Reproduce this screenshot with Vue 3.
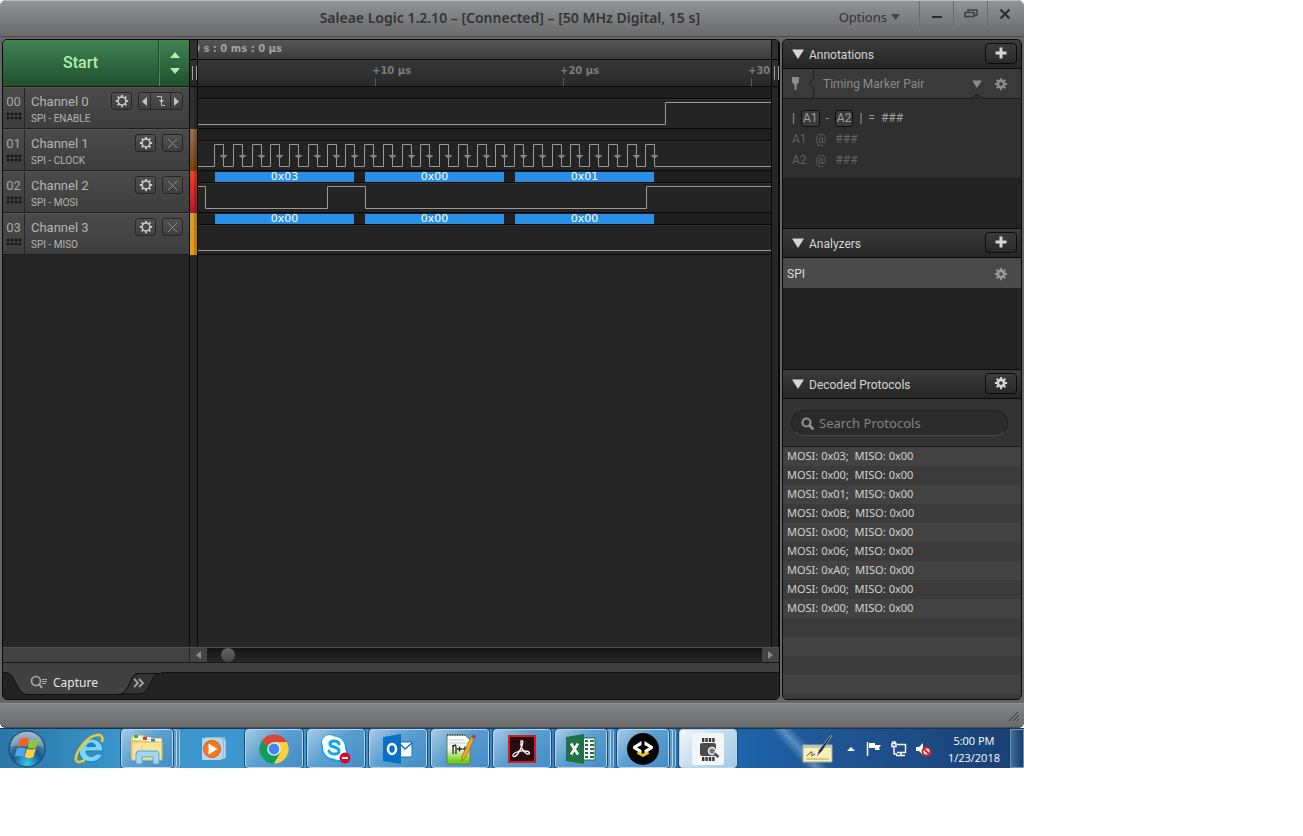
<template>
  <div class="desktop">
    <svg class="symbols" aria-hidden="true">
      <symbol id="gear" viewBox="0 0 16 16">
        <circle cx="8" cy="8" r="4.500" fill="none" stroke="currentColor" stroke-width="1.800" />
        <path
          d="M8 1v3M8 12v3M1 8h3M12 8h3M3 3l2 2M11 11l2 2M3 13l2-2M11 5l2-2"
          stroke="currentColor"
          stroke-width="2.200"
        />
      </symbol>
      <symbol id="cog" viewBox="0 0 16 16">
        <circle cx="8" cy="8" r="3.600" fill="none" stroke="currentColor" stroke-width="3" />
        <path
          d="M8 1v3M8 12v3M1 8h3M12 8h3M3 3l2.500 2.500M10.500 10.500l2.500 2.500M3 13l2.500-2.500M10.500 5.500l2.500-2.500"
          stroke="currentColor"
          stroke-width="2.200"
        />
      </symbol>
      <symbol id="plus" viewBox="0 0 12 12">
        <path d="M6 0.500v11M0.500 6h11" stroke="currentColor" stroke-width="3" />
      </symbol>
      <symbol id="down" viewBox="0 0 12 10">
        <path d="M0 0.500h12L6 10z" fill="currentColor" />
      </symbol>
    </svg>

    <main class="window">
      <header class="titlebar">
        <h1>Saleae Logic 1.2.10 – [Connected] – [50 MHz Digital, 15 s]</h1>
        <button class="options" type="button">
          Options
          <svg width="9" height="6" viewBox="0 0 9 6"><path d="M0 0h9L4.500 6z" fill="#444" /></svg>
        </button>
        <button class="win-btn" type="button" aria-label="Minimize">
          <svg width="12" height="12"><path d="M1 9h10" stroke="#2b2b2b" stroke-width="2" /></svg>
        </button>
        <button class="win-btn" type="button" aria-label="Restore">
          <svg width="14" height="12" fill="none" stroke="#3c3c3c" stroke-width="1.500">
            <path d="M4 4V2h9v5h-3" />
            <rect x="1" y="4.500" width="9" height="4" />
          </svg>
        </button>
        <button class="win-btn" type="button" aria-label="Close">
          <svg width="12" height="12"><path d="M1.500 1.500l9 9M10.500 1.500l-9 9" stroke="#2b2b2b" stroke-width="2" /></svg>
        </button>
      </header>

      <div class="workspace">
        <section class="capture">
          <div class="scope">
            <div class="channel-col">
              <div class="start-row">
                <button class="start" type="button">Start</button>
                <button class="start-opts" type="button" aria-label="Capture settings">
                  <svg width="10" height="22" fill="#b4eeb0">
                    <path d="M0 6L5 0l5 6zM0 16h10l-5 6z" />
                  </svg>
                </button>
              </div>
              <div v-for="ch in channels" :key="ch.id" class="channel">
                <div class="num">
                  <span>{{ ch.id }}</span>
                  <i class="grip"></i>
                </div>
                <div class="ch-text">
                  <span class="ch-name">{{ ch.name }}</span>
                  <span class="ch-sub">{{ ch.sub }}</span>
                </div>
                <button class="ch-btn" type="button" :aria-label="ch.name + ' settings'">
                  <svg width="14" height="14"><use href="#gear" /></svg>
                </button>
                <div v-if="ch.trigger" class="trigger">
                  <button type="button" aria-label="Previous edge">
                    <svg width="5" height="9"><path d="M5 0v9L0 4.500z" fill="#c2c2c2" /></svg>
                  </button>
                  <button class="edge" type="button" aria-label="Trigger edge">
                    <svg width="10" height="12" fill="none" stroke="#c2c2c2">
                      <path d="M1 1.500h4.500v9H9" />
                      <path d="M3 5h5L5.500 8z" fill="#c2c2c2" stroke="none" />
                    </svg>
                  </button>
                  <button type="button" aria-label="Next edge">
                    <svg width="5" height="9"><path d="M0 0v9l5-4.500z" fill="#c2c2c2" /></svg>
                  </button>
                </div>
                <button v-else class="ch-btn" type="button" aria-label="Clear trigger">
                  <svg width="11" height="11"><path d="M1 1l9 9M10 1l-9 9" stroke="#8d8d8d" /></svg>
                </button>
              </div>
            </div>

            <div class="gutter left">
              <div class="handle"></div>
              <div v-for="ch in channels" :key="ch.id" class="swatch" :class="ch.color"></div>
            </div>

            <div class="plot">
              <div class="origin"><span>0 s : 0 ms : 0 µs</span></div>
              <div class="ruler">
                <span v-for="t in ticks" :key="t">{{ t }}</span>
              </div>
              <div v-for="ch in channels" :key="ch.id" class="lane">
                <div class="bytes">
                  <span v-for="(b, i) in ch.bytes" :key="i">{{ b }}</span>
                </div>
                <svg class="wave">
                  <path :d="ch.wave" />
                  <path v-for="x in ch.marks" :key="x" class="mark" :d="`M${x - 4} 13h8l-4 4z`" />
                </svg>
              </div>
            </div>

            <div class="gutter">
              <div class="handle"></div>
            </div>
          </div>

          <div class="scroll-row">
            <div class="scroll-pad"></div>
            <button type="button" aria-label="Scroll left">
              <svg width="5" height="8"><path d="M5 0v8L0 4z" fill="#8b8b8b" /></svg>
            </button>
            <div class="track"><i class="thumb"></i></div>
            <button type="button" aria-label="Scroll right">
              <svg width="5" height="8"><path d="M0 0v8l5-4z" fill="#8b8b8b" /></svg>
            </button>
          </div>

          <nav class="tabs">
            <svg class="tab-shape" width="160" height="37">
              <path d="M115 31c6 0 8-4 11-10s4-11 10-11h19c-5 3-6 8-9 13s-4 8-9 8z" fill="#333" stroke="#0e0e0e" />
              <path d="M0 9c10 0 10 6 13 11s5 11 11 11h91c6 0 8-4 11-10s4-11 10-11h22V0H0z" fill="#414141" />
              <path d="M0 9.500c10 0 10 6 13 11s5 11 11 11h91c6 0 8-4 11-10s4-11 10-11h22" fill="none" stroke="#111" />
            </svg>
            <button class="tab" type="button">
              <svg width="17" height="15" fill="none" stroke="#aaa">
                <circle cx="6" cy="6" r="4.500" stroke-width="1.600" />
                <path d="M9 9l3 4" stroke-width="2" />
                <path d="M12 4.500h5M12 6.500h5M12 8.500h4" />
              </svg>
              Capture
            </button>
            <button class="more" type="button" aria-label="More tabs">
              <svg width="12" height="10" fill="none" stroke="#a5a5a5" stroke-width="1.800">
                <path d="M1 1l4 4-4 4M6 1l4 4-4 4" />
              </svg>
            </button>
          </nav>
        </section>

        <aside class="side">
          <section class="annotations">
            <div class="side-head">
              <svg width="12" height="10"><use href="#down" /></svg>
              <h2>Annotations</h2>
              <button type="button" aria-label="Add annotation"><svg width="12" height="12"><use href="#plus" /></svg></button>
            </div>
            <div class="marker-row">
              <svg width="9" height="13"><path d="M1 0h7v5L5.500 8v5h-2V8L1 5z" fill="#8c8c8c" /></svg>
              <svg class="notch" width="6" height="29"><path d="M5.500 0v9l-4 5.500 4 5.500v9" fill="none" stroke="#1f1f1f" /></svg>
              <span>Timing Marker Pair</span>
              <svg class="arrow" width="10" height="8" viewBox="0 0 12 10"><use href="#down" /></svg>
              <button type="button" aria-label="Marker settings"><svg width="14" height="14"><use href="#cog" /></svg></button>
              <svg class="bump" width="16" height="5"><path d="M0 4.500c5 0 5-4 8-4s3 4 8 4" fill="#2e2e2e" stroke="#1d1d1d" /></svg>
            </div>
            <div class="markers">
              <p class="diff">
                <span>|</span><kbd>A1</kbd><span>-</span><kbd>A2</kbd><span>|</span><span>=</span><span>###</span>
              </p>
              <p><span>A1</span><span>@</span><span>###</span></p>
              <p><span>A2</span><span>@</span><span>###</span></p>
            </div>
          </section>

          <section class="analyzers">
            <div class="side-head">
              <svg width="12" height="10"><use href="#down" /></svg>
              <h2>Analyzers</h2>
              <button type="button" aria-label="Add analyzer"><svg width="12" height="12"><use href="#plus" /></svg></button>
            </div>
            <div class="analyzer">
              <span>SPI</span>
              <button type="button" aria-label="SPI settings"><svg width="14" height="14"><use href="#cog" /></svg></button>
            </div>
          </section>

          <section class="decoded">
            <div class="side-head">
              <svg width="12" height="10"><use href="#down" /></svg>
              <h2>Decoded Protocols</h2>
              <button type="button" aria-label="Protocol settings"><svg width="14" height="14"><use href="#cog" /></svg></button>
            </div>
            <div class="search">
              <label>
                <svg width="13" height="13" fill="none" stroke="#929292">
                  <circle cx="5.500" cy="5.500" r="4" stroke-width="2.200" />
                  <path d="M8.500 8.500l4 4" stroke-width="2.600" />
                </svg>
                <input type="text" placeholder="Search Protocols" aria-label="Search Protocols" />
              </label>
            </div>
            <ul>
              <li v-for="(row, i) in decoded" :key="i">MOSI: {{ row[0] }};&nbsp; MISO: {{ row[1] }}</li>
            </ul>
          </section>
        </aside>
      </div>

      <footer class="statusbar">
        <svg width="12" height="11" stroke="#333"><path d="M1 10L10 1M5 10l6-6M9 10l2-2" /></svg>
      </footer>
    </main>

    <div class="taskbar">
      <button class="orb" type="button" aria-label="Start menu">
        <svg width="38" height="38" viewBox="0 0 38 38">
          <defs>
            <radialGradient id="orbFill" cx="0.500" cy="0.900" r="0.900">
              <stop offset="0" stop-color="#3fc4ee" />
              <stop offset="0.450" stop-color="#17588c" />
              <stop offset="1" stop-color="#8fabc2" />
            </radialGradient>
          </defs>
          <circle cx="19" cy="19" r="18" fill="url(#orbFill)" stroke="#173f63" />
          <path d="M3 17a16 15 0 0 1 32 0c-10-3-22-3-32 0z" fill="#fff" opacity="0.250" />
          <path d="M12 9c3-2 6-2 9-0.500L18.500 17c-3-1.500-6-1.500-9 0z" fill="#f0632a" />
          <path d="M22 9c3 1.500 6 1.500 9-1l-2.500 9c-3 2-6 2-9 0.500z" fill="#8fc83f" />
          <path d="M9 18.500c3-1.500 6-1.500 9 0l-2.500 8.500c-3-1.500-6-1.500-9 0z" fill="#4fa9e8" />
          <path d="M19 18.500c3 1.500 6 1.500 9-0.500l-2.500 9c-3 1.500-6 1.500-9 0z" fill="#fbd03b" />
        </svg>
      </button>

      <button class="task plain" type="button" aria-label="Internet Explorer">
        <svg width="34" height="34" viewBox="0 0 34 34" fill="none">
          <path d="M30 19H13c0 6 7 7 10 3h6.500C25 34 6 32 6 18 7 3 30 3 30 19z" fill="#79d6fb" stroke="#1a78bd" />
          <path d="M13 15h10c0-6-9.500-6-10 0z" fill="#2681bd" />
          <path d="M29 10c3-11-10-8-18 1S0 30 6 30c2 0 4-1 6-2" stroke="#f0c928" stroke-width="2.600" />
        </svg>
      </button>

      <button class="task stacked" type="button" aria-label="Windows Explorer">
        <svg width="34" height="32" viewBox="0 0 34 32">
          <path d="M1 5l2-3h10l2 3h17v21H1z" fill="#e9cd72" />
          <path d="M3 3h9v4H3z" fill="#fff6cf" />
          <path d="M4 2h4v3H4z" fill="#2dae3e" />
          <path d="M11 4h10v4H11z" fill="#fff6cf" />
          <path d="M13 4h4v3h-4z" fill="#d43d25" />
          <path d="M19 6h12v4H19z" fill="#fff6cf" />
          <path d="M21 6h4v3h-4z" fill="#2b8ad8" />
          <path d="M2 9h30v18H2z" fill="#f6e49b" stroke="#d8bd62" />
          <path d="M6 31V21q0-3 3-3h17q3 0 3 3v10h-6v-7H12v7z" fill="#9fd6f0" stroke="#5aa4cc" />
        </svg>
      </button>

      <button class="task plain" type="button" aria-label="Media Player">
        <svg width="26" height="26" viewBox="0 0 26 26">
          <path d="M4 1h20v22H4z" fill="#8dbbdc" />
          <path d="M21 3v20M24 4v18" stroke="#e2f1fb" />
          <path d="M1 2h19v22H1z" fill="#b8d4e8" />
          <circle cx="11" cy="13" r="8.500" fill="#f07a1d" stroke="#d35c10" />
          <path d="M7.500 7.500l9 5.500-9 5.500z" fill="#fff" />
        </svg>
      </button>

      <button class="task" type="button" aria-label="Chrome">
        <svg width="30" height="30" viewBox="0 0 30 30">
          <path d="M15 15L2.400 7.700A14.500 14.500 0 0 1 27.600 7.700z" fill="#db4437" />
          <path d="M2.400 7.700A14.500 14.500 0 0 0 15 29.500L21 18.500 15 15z" fill="#109d58" />
          <path d="M27.600 7.700A14.500 14.500 0 0 1 15 29.500l6.500-11L15 8h12.700z" fill="#ffcd40" />
          <circle cx="15" cy="15" r="6.800" fill="#f3f3f3" />
          <circle cx="15" cy="15" r="5.400" fill="#4285f4" />
        </svg>
      </button>

      <button class="task" type="button" aria-label="Skype">
        <svg width="32" height="32" viewBox="0 0 32 32">
          <circle cx="10" cy="10" r="9" fill="#12a5e8" />
          <circle cx="19" cy="20" r="9" fill="#12a5e8" />
          <circle cx="14" cy="15" r="12.500" fill="#12a5e8" />
          <circle cx="9.500" cy="9.500" r="7.500" fill="#fff" />
          <circle cx="18.500" cy="19.500" r="7.500" fill="#fff" />
          <circle cx="14" cy="14.500" r="11" fill="#fff" />
          <path d="M19 11c-1-4-9-4-9 0 0 4 9 2 9 7 0 4-9 4-10 0" fill="none" stroke="#12a5e8" stroke-width="3" stroke-linecap="round" />
          <circle cx="25" cy="25" r="5.500" fill="#d60b2a" />
          <path d="M22 25h6" stroke="#fff" stroke-width="2" />
        </svg>
      </button>

      <button class="task" type="button" aria-label="Outlook">
        <svg width="30" height="32" viewBox="0 0 30 32">
          <path d="M16 9h13v15H16z" fill="#fff" stroke="#0e72c5" />
          <path d="M16 10l6 6 7-6" fill="none" stroke="#0e72c5" stroke-width="1.600" />
          <path d="M0 4l18-3v30L0 28z" fill="#0a70c4" />
          <ellipse cx="9" cy="16" rx="4" ry="5" fill="none" stroke="#fff" stroke-width="2.600" />
        </svg>
      </button>

      <button class="task" type="button" aria-label="Notepad++">
        <svg width="32" height="34" viewBox="0 0 32 34">
          <defs>
            <linearGradient id="nppFill" x1="0" y1="0" x2="0" y2="1">
              <stop offset="0.450" stop-color="#fdfdf2" />
              <stop offset="0.900" stop-color="#6fd010" />
            </linearGradient>
          </defs>
          <path d="M3 3h18l5 5v24H3z" fill="url(#nppFill)" stroke="#6b7757" />
          <path d="M3 3h18" stroke="#555" stroke-width="2" stroke-dasharray="1 1.500" />
          <path d="M5 8h15M5 11h19" stroke="#c4ccd0" />
          <path d="M9 22v-9M9 15q3-4 3 0v7M13 17h5M15.500 14.500v5M18.500 17h5M21 14.500v5" fill="none" stroke="#222" stroke-width="1.300" />
          <path d="M27 5l3 2-8 18-4 4v-5z" fill="#efaa2b" stroke="#9a651a" stroke-width="0.700" />
          <path d="M28 5l1-3 3 2-1 3z" fill="#a3415d" />
        </svg>
      </button>

      <button class="task" type="button" aria-label="Acrobat Reader">
        <svg width="30" height="30" viewBox="0 0 30 30">
          <path d="M2 2h26v26H2z" fill="#270c10" stroke="#d31f1c" stroke-width="2" />
          <path
            d="M14 7c3-2 2 4-1 9-2 5-6 8-7 6-1-3 8-6 12-5 5 0 6 4 2 3-4-2-7-8-6-13z"
            fill="none"
            stroke="#fff"
            stroke-width="1.300"
          />
        </svg>
      </button>

      <button class="task stacked" type="button" aria-label="Excel">
        <svg width="30" height="32" viewBox="0 0 30 32">
          <path d="M15 5h14v22H15z" fill="#fff" stroke="#1f7244" />
          <path d="M19 8h3M24 8h4M19 12h3M24 12h4M19 16h3M24 16h4M19 20h3M24 20h4M19 24h3M24 24h4" stroke="#1f7244" stroke-width="2" />
          <path d="M0 4l18-3v30L0 28z" fill="#1f7244" />
          <path d="M5 10.500l7 11M12 10.500l-7 11" stroke="#fff" stroke-width="2.600" />
        </svg>
      </button>

      <button class="task stacked" type="button" aria-label="Code tool">
        <svg width="32" height="32" viewBox="0 0 32 32">
          <circle cx="16" cy="16" r="16" fill="#050505" />
          <path d="M14.500 8v4l-4.500 2.500 4.500 2.500v4L6 15.500v-2zM17.500 8v4l4.500 2.500-4.500 2.500v4L26 15.500v-2z" fill="#fff" />
          <path d="M10.500 19.500l5.500 3 5.500-3" fill="none" stroke="#f2c51c" stroke-width="2.600" />
        </svg>
      </button>

      <button class="task active" type="button" aria-label="Logic">
        <svg width="32" height="32" viewBox="0 0 32 32">
          <rect width="32" height="32" rx="2" fill="#f3f5f6" />
          <path d="M10 7h13M10 26h13" stroke="#353535" stroke-width="4" stroke-dasharray="2.400 1" />
          <rect x="8" y="10" width="16" height="13" rx="2" fill="#4a4a4a" />
          <circle cx="20" cy="18" r="3.500" fill="#777" stroke="#f3f5f6" stroke-width="1.500" />
          <path d="M22.500 20.500l4 3.500" stroke="#4a4a4a" stroke-width="2.600" />
        </svg>
      </button>

      <div class="tray">
        <svg width="32" height="30" viewBox="0 0 32 30">
          <path d="M1 11h29v17H1z" fill="#f6f0b8" stroke="#b1a982" />
          <path d="M1 11h29v3H1z" fill="#c2c4bf" />
          <path d="M4 25h23" stroke="#b5a257" />
          <path d="M5 22c3-3 5-6 5-3s-2 4 3 1" fill="none" stroke="#444" />
          <path d="M30 2L20 17l-5 5 2-6L28 2z" fill="#222e38" stroke="#a7bdc8" stroke-width="0.700" />
        </svg>
        <svg width="8" height="4"><path d="M0 4l4-4 4 4z" fill="#fff" /></svg>
        <svg width="16" height="16">
          <path d="M1.500 1v14" stroke="#fff" stroke-width="1.500" />
          <path d="M3 2h6v2h6l-2 3 1 2H9V7H3z" fill="#fff" />
        </svg>
        <svg width="16" height="16" fill="none" stroke="#fff" stroke-width="1.400">
          <path d="M6 3.500h8.500v8H6M5 14.500h9M10 12v2" />
          <path d="M1 2.500h4v3H1zM2 0v2M4 0v2M3 6v7h3" />
        </svg>
        <svg width="16" height="16">
          <path d="M0 6h3l4-4v12l-4-4H0z" fill="#fff" />
          <circle cx="10.500" cy="10.500" r="4" fill="#fff" stroke="#d8202a" stroke-width="2" />
          <path d="M7.500 7.500l6 6" stroke="#d8202a" stroke-width="2" />
        </svg>
        <time>5:00 PM<br />1/23/2018</time>
        <button class="show-desktop" type="button" aria-label="Show desktop"></button>
      </div>
    </div>
  </div>
</template>

<script setup>
const ticks = ['+10 µs', '+20 µs', '+30']

// 24 clock pulses, three bytes of eight
const pulses = Array.from({ length: 24 }, (_, i) => Math.floor(16.5 + i * 18.75) + 0.5)
const clock = 'M0 24.5' + pulses.map((x) => `H${x}V2.5H${x + 9}V24.5`).join('') + 'H3000'

const channels = [
  { id: '00', name: 'Channel 0', sub: 'SPI - ENABLE', color: 'black', trigger: true, bytes: [], wave: 'M0 24.5H467.5V2.5H3000' },
  {
    id: '01',
    name: 'Channel 1',
    sub: 'SPI - CLOCK',
    color: 'brown',
    bytes: [],
    wave: clock,
    marks: pulses.map((x) => x + 9),
  },
  {
    id: '02',
    name: 'Channel 2',
    sub: 'SPI - MOSI',
    color: 'red',
    bytes: ['0x03', '0x00', '0x01'],
    wave: 'M0 2.5H7.5V24.5H129.5V2.5H167.5V24.5H448.5V2.5H3000',
  },
  {
    id: '03',
    name: 'Channel 3',
    sub: 'SPI - MISO',
    color: 'orange',
    bytes: ['0x00', '0x00', '0x00'],
    wave: 'M0 24.5H3000',
  },
]

const decoded = [
  ['0x03', '0x00'],
  ['0x00', '0x00'],
  ['0x01', '0x00'],
  ['0x0B', '0x00'],
  ['0x00', '0x00'],
  ['0x06', '0x00'],
  ['0xA0', '0x00'],
  ['0x00', '0x00'],
  ['0x00', '0x00'],
]
</script>

<style>
body {
  background: #fff;
}
</style>

<style scoped>
* {
  box-sizing: border-box;
}

button {
  display: flex;
  align-items: center;
  justify-content: center;
  padding: 0;
  border: 0;
  background: none;
  color: inherit;
  font: inherit;
}

h1,
h2,
p,
ul {
  margin: 0;
  padding: 0;
  list-style: none;
}

svg {
  display: block;
  flex: none;
}

.symbols {
  position: absolute;
  width: 0;
  height: 0;
}

.desktop {
  display: flex;
  flex-direction: column;
  max-width: 1024px;
  min-height: 768px;
  font-family: Roboto, sans-serif;
  font-size: 12px;
  color: #b5b5b5;
}

.window {
  flex: 1;
  display: flex;
  flex-direction: column;
  background: #666;
  border-radius: 6px;
}

/* title bar */
.titlebar {
  display: flex;
  align-items: flex-start;
  height: 37px;
  margin-bottom: 2px;
  padding-right: 3px;
  background: linear-gradient(#929395, #7d7e80 50%, #6b6b6b);
  border-top: 1px solid #b9c2be;
  border-bottom: 1px solid #4b4b4b;
  border-radius: 6px 6px 0 0;
  color: #333;
  font-family: "Noto Sans", sans-serif;
}

.titlebar h1 {
  flex: 1;
  padding-left: 181px;
  text-align: center;
  font-size: 14px;
  font-weight: 600;
  line-height: 34px;
  white-space: nowrap;
}

.options {
  gap: 4px;
  height: 31px;
  margin-right: 19px;
  font-size: 13px;
}

.win-btn {
  width: 34px;
  height: 25px;
  border-left: 1px solid #696a6b;
}

/* workspace */
.workspace {
  flex: 1;
  display: flex;
  gap: 2px;
  padding: 0 2px;
}

.capture {
  flex: 1;
  min-width: 0;
  display: flex;
  flex-direction: column;
  background: #262626;
  border: 1px solid #0a0a0a;
  border-radius: 5px;
  overflow: hidden;
}

.scope {
  flex: 1;
  display: flex;
}

.channel-col {
  width: 186px;
}

.start-row {
  display: flex;
  height: 47px;
  border-bottom: 1px solid #101a13;
  background: linear-gradient(#3f8252, #2f6a40 50%, #214f2f);
  color: #b4eeb0;
}

.start {
  flex: 1;
  padding-bottom: 2px;
  font-size: 16px;
  font-weight: 500;
  border-right: 1px solid #1e452a;
}

.start-opts {
  width: 30px;
  border-left: 1px solid #4a8b5c;
}

.channel {
  display: flex;
  align-items: flex-start;
  height: 42px;
  padding-right: 6px;
  border-top: 1px solid #565656;
  border-bottom: 1px solid #1c1c1c;
  background: linear-gradient(#4a4a4a, #3e3e3e);
}

.num {
  align-self: stretch;
  width: 22px;
  padding-top: 6px;
  border-right: 1px solid #262626;
  text-align: center;
  font-size: 13px;
  line-height: 16px;
  color: #a8a8a8;
}

.grip {
  display: block;
  width: 16px;
  height: 8px;
  margin: 2px 0 0 3px;
  background: radial-gradient(circle, #191919 1px, transparent 2px) 0 0 / 4px 4px;
}

.ch-text {
  flex: 1;
  display: flex;
  flex-direction: column;
  padding: 6px 0 0 6px;
  white-space: nowrap;
}

.ch-name {
  font-size: 13px;
  line-height: 16px;
}

.ch-sub {
  font-size: 10px;
  line-height: 18px;
}

.ch-btn,
.trigger {
  height: 18px;
  margin: 4px 0 0 6px;
  border: 1px solid #252525;
  border-radius: 3px;
  background: linear-gradient(#505050, #3f3f3f);
  color: #c8c8c8;
}

.ch-btn {
  width: 21px;
}

.trigger {
  display: flex;
  width: 45px;
}

.trigger button {
  width: 11px;
}

.trigger .edge {
  flex: 1;
  border: solid #282828;
  border-width: 0 1px;
}

.gutter {
  width: 8px;
  border: solid #080808;
  border-width: 0 1px;
  background: #262626;
}

.gutter.left {
  width: 9px;
}

.handle {
  height: 47px;
  padding: 26px 2px 6px;
  border-bottom: 1px solid #080808;
  background: linear-gradient(#303030 19px, #000 19px, #000 20px, #303030 20px, #252525);
}

.handle::before {
  content: "";
  display: block;
  width: 3px;
  height: 14px;
  border: solid #a0a0a0;
  border-width: 0 1px;
}

.swatch {
  height: 42px;
  border-right: 3px solid #00000030;
}

.black { background: #303030; }
.brown { background: linear-gradient(#96714f, #80420f); }
.red { background: linear-gradient(#f6421b, #b5143d); }
.orange { background: linear-gradient(#d1a02c, #ee9c0a); }

.plot {
  flex: 1;
  min-width: 0;
  font-family: "DejaVu Sans", sans-serif;
}

.origin {
  display: flex;
  height: 20px;
  overflow: hidden;
  border-bottom: 1px solid #0a0a0a;
  background: linear-gradient(#565656, #3c3c3c);
  color: #a3a3a3;
  font-size: 10px;
  font-weight: 700;
  line-height: 18px;
}

.origin span {
  margin-left: -5px;
  white-space: nowrap;
}

.ruler {
  display: flex;
  height: 27px;
  padding-left: 174px;
  overflow: hidden;
  border-bottom: 1px solid #080808;
  background: linear-gradient(#373737, #292929);
  color: #7c7c7c;
  font-size: 10px;
  font-weight: 700;
  line-height: 22px;
  white-space: nowrap;
}

.ruler span {
  flex: none;
  width: 188px;
}

.ruler span:last-child {
  width: 24px;
}

.ruler span::after {
  content: "";
  display: block;
  width: 1px;
  height: 8px;
  margin: -4px 0 0 3px;
  background: #5b5b5b;
}

.lane {
  height: 42px;
  border-bottom: 1px solid #080808;
  background: #242424;
}

.bytes {
  display: flex;
  gap: 11px;
  height: 12px;
  padding-left: 17px;
  border-bottom: 1px solid #080808;
  background: #1f1f1f;
}

.bytes span {
  width: 139px;
  margin-top: 1px;
  background: #2a8ee4;
  color: #fff;
  font-size: 11px;
  line-height: 10px;
  text-align: center;
}

.wave {
  width: 100%;
  height: 29px;
  border-top: 1px solid #303030;
  overflow: hidden;
  fill: none;
  stroke: #9a9a9a;
}

.mark {
  fill: #858585;
  stroke: none;
}

/* scrollbar */
.scroll-row {
  display: flex;
  height: 16px;
  border-top: 1px solid #505050;
  border-bottom: 1px solid #161616;
}

.scroll-pad {
  width: 187px;
  background: #424242;
  border-right: 1px solid #222;
}

.scroll-row button {
  width: 17px;
  background: #444;
}

.track {
  flex: 1;
  padding-left: 14px;
  background: linear-gradient(#141414, #282828);
}

.thumb {
  display: block;
  width: 14px;
  height: 14px;
  border-radius: 50%;
  background: linear-gradient(#666, #464646);
}

/* tabs */
.tabs {
  position: relative;
  display: flex;
  height: 36px;
  background: linear-gradient(#414141 9px, #111 9px, #111 10px, #232323 10px);
  font-family: "Noto Sans", sans-serif;
  font-size: 12px;
  color: #e8e8e8;
}

.tab-shape {
  position: absolute;
  inset: 0 auto auto 0;
}

.tab,
.more {
  z-index: 1;
  height: 38px;
}

.tab {
  gap: 6px;
  margin-left: 27px;
}

.more {
  margin-left: 35px;
  height: 40px;
}

/* right side panels */
.side {
  flex: none;
  width: 240px;
  display: flex;
  flex-direction: column;
  border: 1px solid #0a0a0a;
  border-radius: 5px;
  overflow: hidden;
  background: #232323;
}

.annotations {
  min-height: 188px;
}

.analyzers {
  min-height: 141px;
}

.decoded {
  flex: 1;
  display: flex;
  flex-direction: column;
}

.side-head {
  display: flex;
  align-items: center;
  gap: 5px;
  height: 30px;
  padding: 0 4px 0 9px;
  border: solid #080808;
  border-width: 1px 0;
  background: linear-gradient(#3b3b3b, #262626);
  color: #d6d6d6;
}

.annotations .side-head {
  height: 29px;
  border-top: 0;
}

.side-head h2 {
  flex: 1;
  padding-top: 2px;
  font-size: 12px;
  font-weight: 400;
}

.side-head button {
  width: 32px;
  height: 21px;
  margin-bottom: 2px;
  border: 1px solid #0c0c0c;
  border-radius: 4px;
  background: linear-gradient(#3c3c3c, #292929);
}

.marker-row {
  position: relative;
  display: flex;
  align-items: center;
  height: 30px;
  padding: 0 13px 0 8px;
  border-bottom: 1px solid #1d1d1d;
  background: #3a3a3a;
  color: #8c8c8c;
}

.notch {
  margin: 0 9px 0 8px;
}

.marker-row span {
  flex: 1;
}

.arrow {
  margin-right: 12px;
}

.bump {
  position: absolute;
  right: 36px;
  bottom: -1px;
}

.markers {
  padding: 9px 9px 7px;
  background: #2f2f2f;
  color: #626262;
  line-height: 21px;
}

.markers p {
  display: flex;
  align-items: center;
  gap: 9px;
}

.markers .diff {
  gap: 6px;
  color: #a0a0a0;
}

.markers kbd {
  padding: 0 1px;
  border: 1px solid #0d0d0d;
  border-radius: 3px;
  background: #3b3b3b;
  font: inherit;
  line-height: 15px;
}

.analyzer {
  display: flex;
  align-items: center;
  justify-content: space-between;
  height: 30px;
  padding: 1px 13px 0 4px;
  background: #4a4a4a;
  color: #dedede;
}

.analyzer button {
  color: #999;
}

.search {
  padding: 11px 13px 10px 8px;
  background: #333;
  border-bottom: 1px solid #191919;
}

.search label {
  display: flex;
  align-items: center;
  gap: 5px;
  height: 26px;
  padding: 0 9px;
  border: 1px solid #202020;
  border-bottom-color: #484848;
  border-radius: 13px;
  background: #2b2b2b;
}

.search input {
  flex: 1;
  min-width: 0;
  padding: 0;
  border: 0;
  outline: 0;
  background: none;
  color: #ccc;
  font: 13px "Noto Sans", sans-serif;
}

.search input::placeholder {
  color: #858585;
}

.decoded ul {
  flex: 1;
  background: repeating-linear-gradient(#424242 0, #424242 19px, #3b3b3b 19px, #3b3b3b 38px);
  color: #d2d2d2;
  font-family: "Noto Sans", sans-serif;
  font-size: 11px;
}

.decoded li {
  height: 19px;
  padding-left: 4px;
  line-height: 17px;
}

.statusbar {
  display: flex;
  align-items: flex-end;
  justify-content: flex-end;
  height: 25px;
  margin-top: 3px;
  padding: 0 4px 5px;
  border-top: 1px solid #8f8f8f;
  border-bottom: 1px solid #4a4a4a;
  border-radius: 0 0 6px 6px;
  background: linear-gradient(#828385, #6c6c6c);
}

/* Windows taskbar */
.taskbar {
  display: flex;
  align-items: stretch;
  gap: 4px;
  height: 40px;
  border-top: 1px solid #16354f;
  background:
    linear-gradient(48deg, transparent 42%, #a9cbe870 50%, transparent 58%) 745px 0 / 110px 40px no-repeat,
    linear-gradient(90deg, #2a76a8, #3a96cc 12%, #3f97cf 35%, #2f7dbf 60%, #1d62a8 74%, #1f5493 82%, #183f73);
}

.orb {
  width: 55px;
  padding-right: 1px;
}

.task {
  width: 58px;
  border: 1px solid #b5d6ec;
  border-radius: 3px;
  outline: 1px solid #1b4a73;
  background: linear-gradient(135deg, #a5cae4, #5a9fd0 45%, #458dc6);
}

.task.plain {
  padding-left: 4px;
  border-color: transparent;
  outline: 0;
  background: none;
}

.task.stacked {
  width: 52px;
  margin-right: 6px;
  box-shadow: 3px 0 0 #5e9cca, 4px 0 0 #b7d6ea, 6px 0 0 #4b8dbf, 7px 0 0 #a3c7df;
}

.task.active {
  background: linear-gradient(135deg, #f3f8fc, #c3dbee 50%, #a4c7e4);
}

.tray {
  flex: 1;
  display: flex;
  align-items: center;
  justify-content: flex-end;
  gap: 9px;
  color: #fff;
}

.tray > svg:first-child {
  margin-right: 4px;
}

.tray > svg:nth-child(2) {
  margin-right: 2px;
}

.tray time {
  margin: 0 1px 0 7px;
  text-align: center;
  font-family: "Open Sans", sans-serif;
  font-size: 11px;
  line-height: 17px;
}

.show-desktop {
  align-self: stretch;
  width: 14px;
  border: 1px solid #6f93b8;
  background: linear-gradient(90deg, #3f6d9d, #173d6c);
}
</style>
